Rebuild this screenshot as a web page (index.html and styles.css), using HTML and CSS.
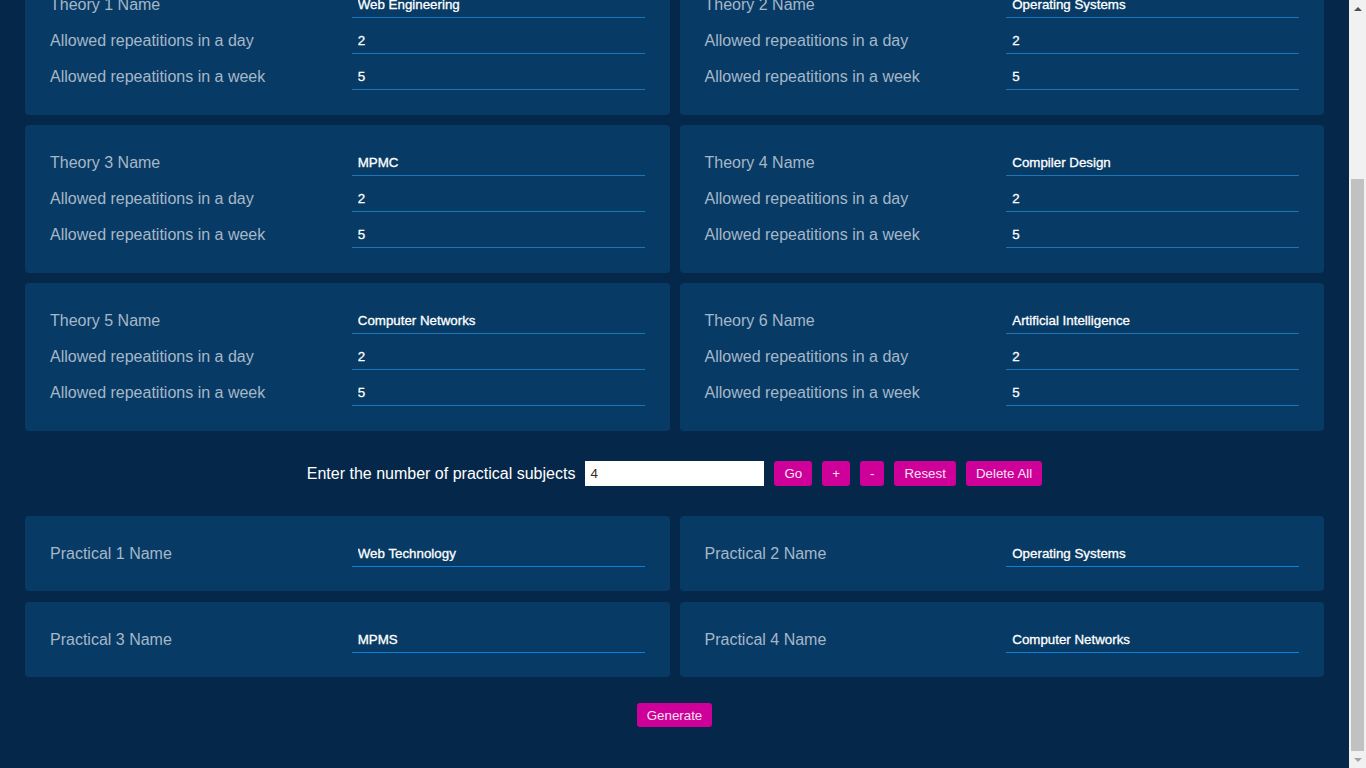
FILE: index.html
```html
<!DOCTYPE html>
<html lang="en">
<head>
<meta charset="utf-8">
<title>Time Table Generator</title>
<link rel="stylesheet" href="styles.css">
</head>
<body>
<div class="viewport">
  <div class="page">
    <header class="head">
      <h1 class="title">Time Table Generator</h1>
    </header>
    <div class="controls">
      <span class="controls-label">Enter the number of theory subjects</span>
      <input class="count" type="text" value="6">
      <button class="btn">Go</button>
      <button class="btn">+</button>
      <button class="btn">-</button>
      <button class="btn">Resest</button>
      <button class="btn">Delete All</button>
    </div>

    <div class="grid theory">
      <div class="card">
        <div class="row"><span class="lbl">Theory 1 Name</span><input class="fld" type="text" value="Web Engineering"></div>
        <div class="row"><span class="lbl">Allowed repeatitions in a day</span><input class="fld" type="text" value="2"></div>
        <div class="row"><span class="lbl">Allowed repeatitions in a week</span><input class="fld" type="text" value="5"></div>
      </div>
      <div class="card">
        <div class="row"><span class="lbl">Theory 2 Name</span><input class="fld" type="text" value="Operating Systems"></div>
        <div class="row"><span class="lbl">Allowed repeatitions in a day</span><input class="fld" type="text" value="2"></div>
        <div class="row"><span class="lbl">Allowed repeatitions in a week</span><input class="fld" type="text" value="5"></div>
      </div>
      <div class="card">
        <div class="row"><span class="lbl">Theory 3 Name</span><input class="fld" type="text" value="MPMC"></div>
        <div class="row"><span class="lbl">Allowed repeatitions in a day</span><input class="fld" type="text" value="2"></div>
        <div class="row"><span class="lbl">Allowed repeatitions in a week</span><input class="fld" type="text" value="5"></div>
      </div>
      <div class="card">
        <div class="row"><span class="lbl">Theory 4 Name</span><input class="fld" type="text" value="Compiler Design"></div>
        <div class="row"><span class="lbl">Allowed repeatitions in a day</span><input class="fld" type="text" value="2"></div>
        <div class="row"><span class="lbl">Allowed repeatitions in a week</span><input class="fld" type="text" value="5"></div>
      </div>
      <div class="card">
        <div class="row"><span class="lbl">Theory 5 Name</span><input class="fld" type="text" value="Computer Networks"></div>
        <div class="row"><span class="lbl">Allowed repeatitions in a day</span><input class="fld" type="text" value="2"></div>
        <div class="row"><span class="lbl">Allowed repeatitions in a week</span><input class="fld" type="text" value="5"></div>
      </div>
      <div class="card">
        <div class="row"><span class="lbl">Theory 6 Name</span><input class="fld" type="text" value="Artificial Intelligence"></div>
        <div class="row"><span class="lbl">Allowed repeatitions in a day</span><input class="fld" type="text" value="2"></div>
        <div class="row"><span class="lbl">Allowed repeatitions in a week</span><input class="fld" type="text" value="5"></div>
      </div>
    </div>

    <div class="controls">
      <span class="controls-label">Enter the number of practical subjects</span>
      <input class="count" type="text" value="4">
      <button class="btn">Go</button>
      <button class="btn">+</button>
      <button class="btn">-</button>
      <button class="btn">Resest</button>
      <button class="btn">Delete All</button>
    </div>

    <div class="grid practical">
      <div class="card card-p">
        <div class="row"><span class="lbl">Practical 1 Name</span><input class="fld fld-p" type="text" value="Web Technology"></div>
      </div>
      <div class="card card-p">
        <div class="row"><span class="lbl">Practical 2 Name</span><input class="fld fld-p" type="text" value="Operating Systems"></div>
      </div>
      <div class="card card-p">
        <div class="row"><span class="lbl">Practical 3 Name</span><input class="fld fld-p" type="text" value="MPMS"></div>
      </div>
      <div class="card card-p">
        <div class="row"><span class="lbl">Practical 4 Name</span><input class="fld fld-p" type="text" value="Computer Networks"></div>
      </div>
    </div>

    <div class="gen">
      <button class="btn btn-gen">Generate</button>
    </div>
  </div>
</div>
<div class="scrollbar">
  <div class="sb-btn"><span class="arrow-up"></span></div>
  <div class="sb-track"><div class="sb-thumb"></div></div>
  <div class="sb-btn"><span class="arrow-down"></span></div>
</div>
</body>
</html>
```
FILE: styles.css
```css
html, body {
  margin: 0;
  padding: 0;
  height: 100%;
}

body {
  display: flex;
  height: 100vh;
  overflow: hidden;
  background: #05284a;
  font-family: "Liberation Sans", Arial, sans-serif;
}

.viewport {
  flex: 1;
  height: 100vh;
  overflow: hidden;
  display: flex;
  flex-direction: column;
  justify-content: flex-end;
}

.page {
  flex-shrink: 0;
  padding: 0 25px 41px;
}

.head {
  padding: 40px 0 20px;
  text-align: center;
}

.title {
  margin: 0;
  color: #ffffff;
  font-size: 32px;
  font-weight: normal;
}

.controls {
  display: flex;
  justify-content: center;
  align-items: center;
  gap: 10px;
  margin: 30px 0;
  height: 25px;
}

.controls-label {
  color: #ffffff;
  font-size: 16px;
}

.count {
  width: 179px;
  height: 25px;
  box-sizing: border-box;
  border: none;
  background: #ffffff;
  color: #3a2a1a;
  font-family: "Liberation Sans", Arial, sans-serif;
  font-size: 13.33px;
  padding: 0 5px;
  outline: none;
}

.btn {
  height: 25px;
  box-sizing: border-box;
  border: none;
  border-radius: 3px;
  background: #cf009a;
  color: #f6e4f1;
  font-family: "Liberation Sans", Arial, sans-serif;
  font-size: 13.33px;
  padding: 0 10px;
  cursor: pointer;
}

.grid {
  display: grid;
  grid-template-columns: 1fr 1fr;
  column-gap: 10px;
  row-gap: 10px;
}

.practical {
  row-gap: 11px;
}

.card {
  background: #073b65;
  border-radius: 4px;
  padding: 15px 25px 25px;
}

.card-p {
  padding-bottom: 24px;
}

.row {
  display: grid;
  grid-template-columns: minmax(0, 1fr) minmax(0, 1fr);
  column-gap: 9px;
  align-items: center;
  padding-top: 9px;
}

.lbl {
  color: #a6b7c8;
  font-size: 16px;
}

.fld {
  width: 100%;
  min-width: 0;
  height: 27px;
  box-sizing: border-box;
  border: none;
  border-bottom: 1px solid #1b76b8;
  background: transparent;
  color: #ffffff;
  font-family: "Liberation Sans", Arial, sans-serif;
  font-size: 13.33px;
  -webkit-text-stroke: 0.3px #ffffff;
  padding: 0 6px;
  outline: none;
}

.fld-p {
  border-bottom-color: #0a80d8;
}

.gen {
  display: flex;
  justify-content: center;
  margin-top: 26px;
}

.btn-gen {
  height: 24px;
}

.scrollbar {
  width: 17px;
  flex-shrink: 0;
  height: 100vh;
  background: #f1f1f1;
  display: flex;
  flex-direction: column;
}

.sb-btn {
  height: 17px;
  flex-shrink: 0;
  display: flex;
  justify-content: center;
  align-items: center;
}

.arrow-up {
  width: 0;
  height: 0;
  border-left: 4px solid transparent;
  border-right: 4px solid transparent;
  border-bottom: 4px solid #505050;
}

.arrow-down {
  width: 0;
  height: 0;
  border-left: 4px solid transparent;
  border-right: 4px solid transparent;
  border-top: 4px solid #a3a3a3;
}

.sb-track {
  flex: 1;
  display: flex;
  flex-direction: column;
  justify-content: flex-end;
}

.sb-thumb {
  height: 572px;
  margin: 0 2px;
  background: #c1c1c1;
}
```
